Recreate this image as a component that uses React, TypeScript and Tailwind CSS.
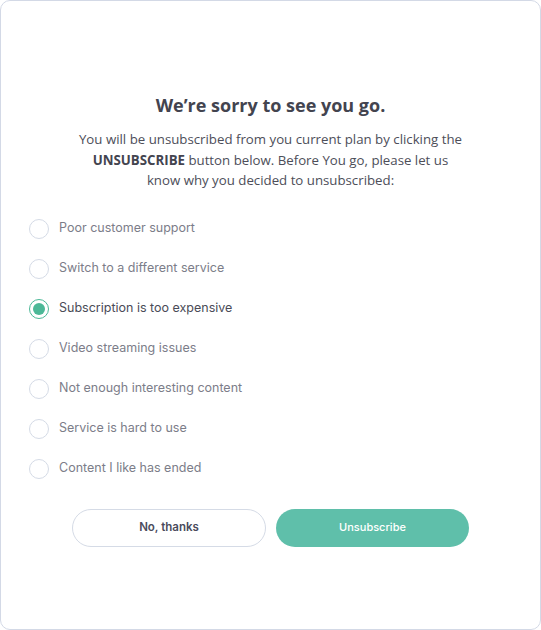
import { useState } from "react";

const reasons = [
  "Poor customer support",
  "Switch to a different service",
  "Subscription is too expensive",
  "Video streaming issues",
  "Not enough interesting content",
  "Service is hard to use",
  "Content I like has ended",
];

export default function App() {
  const [selected, setSelected] = useState(2);

  return (
    <div className="w-[541px] h-[630px] bg-white">
      <div className="h-[630px] border border-[#d3d9e6] rounded-[10px] bg-white pt-[92px]">
        <h1 className="text-center text-[18px] leading-[24px] font-bold text-[#43444f] font-['Open_Sans',sans-serif]">
          We’re sorry to see you go.
        </h1>
        <p className="mt-[12px] w-[388px] mx-auto text-center text-[13.25px] leading-[20.5px] text-[#4d4e59] font-['Open_Sans',sans-serif]">
          You will be unsubscribed from you current plan by clicking the{" "}
          <b className="font-bold text-[#43444f]">UNSUBSCRIBE</b> button below. Before You go, please let us know why you
          decided to unsubscribed:
        </p>

        <ul className="mt-[18px] pl-[28px]">
          {reasons.map((r, i) => (
            <li
              key={r}
              onClick={() => setSelected(i)}
              className="h-[40px] flex items-center gap-[10px] cursor-pointer"
            >
              <span
                className={
                  i === selected
                    ? "w-[20px] h-[20px] rounded-full border-[1.5px] border-[#4cb897] flex items-center justify-center"
                    : "w-[20px] h-[20px] rounded-full border border-[#d5dbe6]"
                }
              >
                {i === selected && <span className="w-[12px] h-[12px] rounded-full bg-[#4cb897]" />}
              </span>
              <span
                className={
                  i === selected
                    ? "text-[12.5px] text-[#4a4b57] font-['Inter',sans-serif]"
                    : "text-[12.5px] text-[#7c7d89] font-['Inter',sans-serif]"
                }
              >
                {r}
              </span>
            </li>
          ))}
        </ul>

        <div className="mt-[20px] flex justify-center gap-[10px]">
          <button className="w-[194px] h-[38px] rounded-full border border-[#d5dbe6] bg-white text-[11.5px] font-semibold text-[#4a4b5c] font-['Inter',sans-serif]">
            No, thanks
          </button>
          <button className="w-[193px] h-[38px] rounded-full bg-[#5fbfaa] text-[11px] font-medium text-white font-['Inter',sans-serif]">
            Unsubscribe
          </button>
        </div>
      </div>
    </div>
  );
}
